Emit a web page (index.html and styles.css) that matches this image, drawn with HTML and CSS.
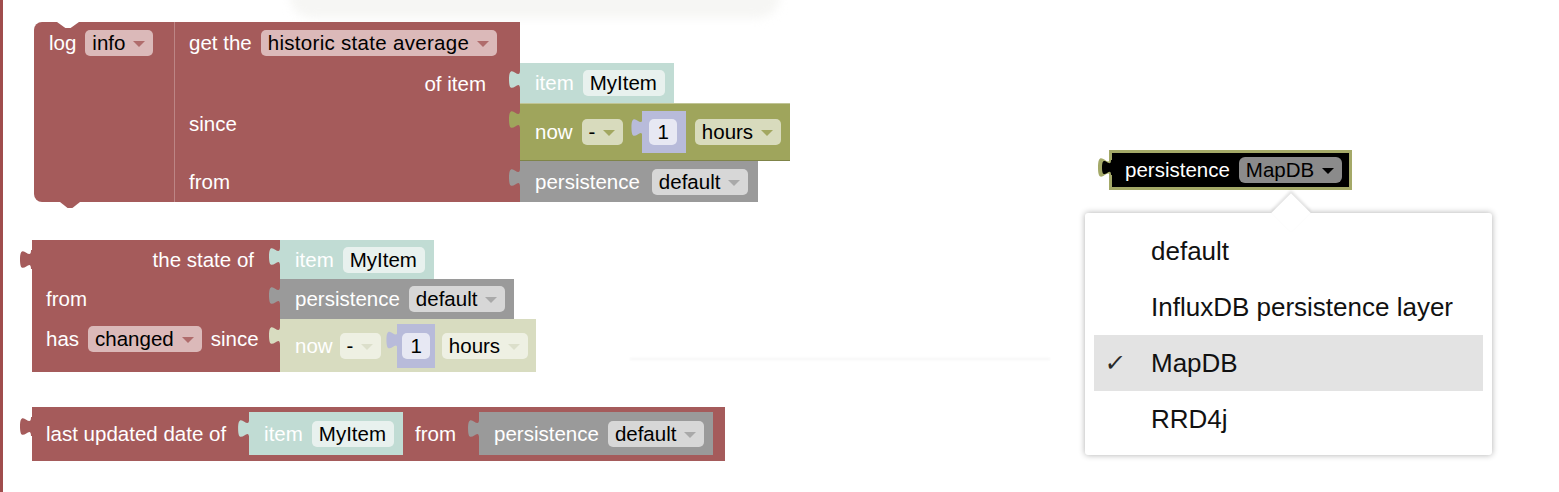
FILE: index.html
```html
<!DOCTYPE html>
<html>
<head>
<meta charset="utf-8">
<title>Blocks</title>
<link rel="stylesheet" href="styles.css">
</head>
<body>
<div class="canvas">
  <div class="edge"></div>
  <div class="smudge smudge-top"></div>
  <div class="smudge smudge-line"></div>

  <!-- Block 1: log info / get the historic state average -->
  <div class="blk b1">
    <div class="log-head">
      <span class="lbl">log</span>
      <span class="fld f-red">info<i class="arr"></i></span>
    </div>
    <div class="get">
      <div class="row">
        <div class="cell c1 r1">
          <span class="lbl">get the</span>
          <span class="fld f-red f-wide">historic state average<i class="arr"></i></span>
        </div>
      </div>
      <div class="row">
        <div class="cell c1 end"><span class="lbl">of item</span></div>
        <div class="vb item h40">
          <span class="lbl">item</span>
          <span class="fld f-item">MyItem</span>
        </div>
      </div>
      <div class="row">
        <div class="cell c1"><span class="lbl">since</span></div>
        <div class="vb now h58">
          <span class="lbl">now</span>
          <span class="fld f-olive">-<i class="arr"></i></span>
          <span class="num"><span class="fld f-num">1</span></span>
          <span class="fld f-olive">hours<i class="arr"></i></span>
        </div>
      </div>
      <div class="row">
        <div class="cell c1"><span class="lbl">from</span></div>
        <div class="vb pers h41 wide">
          <span class="lbl">persistence</span>
          <span class="fld f-gray">default<i class="arr"></i></span>
        </div>
      </div>
    </div>
  </div>

  <!-- Block 2: the state of ... has changed since -->
  <div class="blk b2 out">
    <div class="row">
      <div class="cell c2 end"><span class="lbl">the state of</span></div>
      <div class="vb item h39">
        <span class="lbl">item</span>
        <span class="fld f-item">MyItem</span>
      </div>
    </div>
    <div class="row">
      <div class="cell c2"><span class="lbl">from</span></div>
      <div class="vb pers h40">
        <span class="lbl">persistence</span>
        <span class="fld f-gray">default<i class="arr"></i></span>
      </div>
    </div>
    <div class="row">
      <div class="cell c2">
        <span class="lbl">has</span>
        <span class="fld f-red">changed<i class="arr"></i></span>
        <span class="lbl">since</span>
      </div>
      <div class="vb now pale h53">
        <span class="lbl">now</span>
        <span class="fld f-pale">-<i class="arr"></i></span>
        <span class="num"><span class="fld f-num">1</span></span>
        <span class="fld f-pale">hours<i class="arr"></i></span>
      </div>
    </div>
  </div>

  <!-- Block 3: last updated date of -->
  <div class="blk b3 out">
    <span class="lbl">last updated date of</span>
    <div class="vb item h43">
      <span class="lbl">item</span>
      <span class="fld f-item">MyItem</span>
    </div>
    <span class="lbl">from</span>
    <div class="vb pers h43">
      <span class="lbl">persistence</span>
      <span class="fld f-gray">default<i class="arr"></i></span>
    </div>
  </div>

  <!-- Selected block with open dropdown -->
  <div class="sel">
    <span class="lbl">persistence</span>
    <span class="fld f-sel">MapDB<i class="arr"></i></span>
  </div>

  <div class="menu">
    <div class="mi">default</div>
    <div class="mi">InfluxDB persistence layer</div>
    <div class="mi on"><span class="chk">&#10003;</span>MapDB</div>
    <div class="mi">RRD4j</div>
  </div>
</div>
</body>
</html>
```

FILE: styles.css
```css
html, body {
  margin: 0;
  padding: 0;
  background: #ffffff;
}

.canvas {
  position: relative;
  width: 1559px;
  height: 492px;
  overflow: hidden;
  font-family: "Liberation Sans", Arial, sans-serif;
  font-size: 20.5px;
  color: #ffffff;
}

.edge {
  position: absolute;
  left: 0;
  top: 0;
  width: 3px;
  height: 100%;
  background: #a04d4d;
}

.smudge {
  position: absolute;
}

.smudge-top {
  left: 290px;
  top: -26px;
  width: 490px;
  height: 44px;
  border-radius: 24px;
  background: #f6f6f4;
  filter: blur(5px);
}

.smudge-line {
  left: 630px;
  top: 358px;
  width: 420px;
  height: 2px;
  background: #f5f5f5;
  filter: blur(1px);
}

/* ---------- generic block parts ---------- */
.blk {
  position: absolute;
}

.lbl {
  line-height: 26px;
  white-space: nowrap;
}

.row {
  display: flex;
}

.cell {
  background: #a55b5b;
  display: flex;
  align-items: flex-start;
  gap: 9px;
  box-sizing: border-box;
  padding: 8px 0 0 14px;
}

.cell.end {
  justify-content: flex-end;
}

.c1 {
  width: 345px;
}

.c1.end {
  padding-right: 34px;
}

.c2 {
  width: 248px;
  padding-top: 7px;
}

.c2.end {
  padding-right: 26px;
}

.r1 {
  height: 41px;
}

/* fields */
.fld {
  display: inline-flex;
  align-items: center;
  gap: 8px;
  height: 26px;
  line-height: 26px;
  padding: 0 8px 0 7px;
  border-radius: 5px;
  color: #000000;
  white-space: nowrap;
  box-sizing: border-box;
}

.f-wide {
  letter-spacing: 0.3px;
}

.arr {
  display: inline-block;
  width: 0;
  height: 0;
  border-left: 6px solid transparent;
  border-right: 6px solid transparent;
  border-top: 6px solid currentColor;
  margin-top: 2px;
}

.f-red { background: #dbb9b9; }
.f-red .arr { color: #b06c6c; }

.f-item { background: #e8f1ee; padding: 0 8px 0 7px; }

.f-olive { background: #d8dbbd; }
.f-olive .arr { color: #a2a760; }

.f-gray { background: #d7d7d7; }
.f-gray .arr { color: #a9a9a9; }

.f-pale { background: #eef0e3; }
.f-pale .arr { color: #dcdfcb; }

.f-num {
  background: #e7e8f3;
  padding: 0 8px;
}

.f-sel {
  background: #8b8b8b;
  border-radius: 6px;
}
.f-sel .arr { color: #000000; }

/* value blocks */
.vb {
  position: relative;
  display: flex;
  align-items: center;
  gap: 9px;
  box-sizing: border-box;
  padding: 0 9px 0 15px;
}

.vb::before,
.num::before,
.out::before {
  content: "";
  position: absolute;
  left: -11px;
  top: 7px;
  width: 12px;
  height: 19px;
  background: inherit;
  clip-path: path("M12,0 L11,0 C11,12.67 0,-10.13 0,9.5 S11,6.33 11,19 L12,19 Z");
}

.h39 { height: 39px; }
.h40 { height: 40px; }
.h41 { height: 41px; }
.h43 { height: 43px; }
.h53 { height: 53px; }
.h58 { height: 58px; }

.item {
  background: #c1dcd4;
}

.now {
  background: #9fa55c;
  box-shadow: inset 0 1px 0 rgba(255, 255, 255, 0.35), inset 0 -1px 0 rgba(0, 0, 0, 0.2);
}

.now.pale {
  background: #d8dcc0;
  box-shadow: none;
  gap: 7px;
  padding-right: 8px;
}

.pers {
  background: #9a9a9a;
}

.pers.wide {
  gap: 12px;
  padding-right: 10px;
}

.num {
  position: relative;
  display: flex;
  align-items: center;
  margin-left: 10px;
  padding: 8px 9px 8px 7px;
  background: #b8bbda;
}

.pale .num {
  margin-left: 9px;
  padding: 9px 5px 9px 5px;
}

/* ---------- block 1 ---------- */
.b1 {
  left: 34px;
  top: 22px;
  display: flex;
}

.log-head {
  position: relative;
  width: 140px;
  box-sizing: border-box;
  background: #a55b5b;
  border-radius: 8px 0 0 8px;
  padding: 8px 0 0 15px;
  display: flex;
  align-items: flex-start;
  gap: 9px;
}

.log-head::before {
  content: "";
  position: absolute;
  left: 23px;
  top: 0;
  width: 22px;
  height: 6px;
  background: #ffffff;
  clip-path: polygon(0 0, 100% 0, 62% 100%, 38% 100%);
}

.log-head::after {
  content: "";
  position: absolute;
  left: 26px;
  bottom: -6px;
  width: 20px;
  height: 6px;
  background: #a55b5b;
  clip-path: polygon(0 0, 100% 0, 62% 100%, 38% 100%);
}

.get {
  display: flex;
  flex-direction: column;
  border-left: 1px solid #bd8585;
}

/* ---------- block 2 ---------- */
.b2 {
  left: 32px;
  top: 240px;
  display: flex;
  flex-direction: column;
}

.out::before {
  left: -12px;
  top: 10px;
  background: #a55b5b;
}

/* ---------- block 3 ---------- */
.b3 {
  left: 32px;
  top: 407px;
  display: flex;
  align-items: center;
  gap: 12px;
  padding: 5px 12px 6px 14px;
  background: #a55b5b;
}

.b3 .vb {
  margin-left: 11px;
}

/* ---------- selected block ---------- */
.sel {
  position: absolute;
  left: 1109px;
  top: 150px;
  display: flex;
  align-items: center;
  gap: 9px;
  padding: 4px 7px 4px 13px;
  background: #000000;
  border: 3px solid #a4a968;
}

.sel::before {
  content: "";
  position: absolute;
  left: -14px;
  top: 4px;
  width: 13px;
  height: 21px;
  background: #a4a968;
  clip-path: path("M13,0 L12,0 C12,14 0,-11 0,10.5 S12,7 12,21 L13,21 Z");
}

.sel::after {
  content: "";
  position: absolute;
  left: -10px;
  top: 7px;
  width: 10px;
  height: 15px;
  background: #000000;
  clip-path: path("M10,0 L9,0 C9,10 0,-8 0,7.5 S9,5 9,15 L10,15 Z");
}

/* ---------- dropdown menu ---------- */
.menu {
  position: absolute;
  left: 1085px;
  top: 213px;
  width: 407px;
  box-sizing: border-box;
  padding: 10px 9px 8px 9px;
  background: #ffffff;
  border-radius: 3px;
  box-shadow: 0 0 6px rgba(0, 0, 0, 0.32);
  font-size: 26px;
  color: #111111;
}

.menu::before {
  content: "";
  position: absolute;
  left: 192px;
  top: -14px;
  width: 28px;
  height: 28px;
  background: #ffffff;
  transform: rotate(45deg);
  box-shadow: -2px -2px 3px rgba(0, 0, 0, 0.12);
}

.mi {
  position: relative;
  height: 56px;
  display: flex;
  align-items: center;
  padding-left: 57px;
  white-space: nowrap;
}

.mi.on {
  background: #e3e3e3;
}

.chk {
  position: absolute;
  left: 11px;
  top: 0;
  line-height: 56px;
  font-family: "DejaVu Sans", sans-serif;
  font-size: 24px;
  color: #2a2a2a;
  transform: skewX(-8deg);
}
```
